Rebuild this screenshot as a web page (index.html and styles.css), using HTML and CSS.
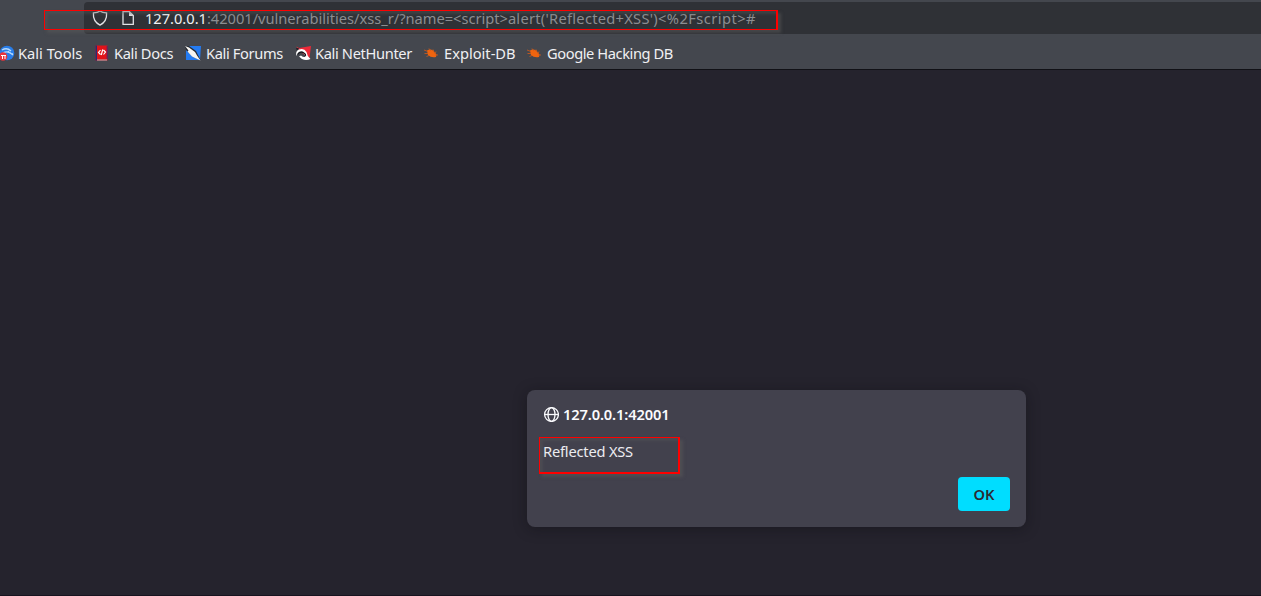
FILE: index.html
```html
<!DOCTYPE html>
<html lang="en">
<head>
<meta charset="utf-8">
<title>127.0.0.1:42001</title>
<link rel="stylesheet" href="styles.css">
</head>
<body>
<div class="browser">
  <header class="toolbar">
    <div class="urlbar">
      <svg class="shield" width="16" height="16" viewBox="0 0 16 16"><path d="M8 .9 C6.3 2.2 4.2 2.7 1.4 2.8 C1 8.600 3.200 12.800 8 15.100 C12.800 12.800 15 8.600 14.600 2.800 C11.800 2.700 9.700 2.200 8 .9Z"/></svg>
      <svg class="page-icon" width="14" height="16" viewBox="0 0 14 16"><path d="M2 1.700H8.400L12.300 5.600V14.300H2Z"/><path class="fold" d="M8 1.500V6H12.500Z"/></svg>
      <span class="url"><b>127.0.0.1</b>:42001/vulnerabilities/xss_r/?name=&lt;script&gt;<span class="call">alert('Reflected+XSS')</span><span class="tail">&lt;%2Fscript&gt;#</span></span>
    </div>
    <div class="mark mark-url"></div>
  </header>
  <nav class="bookmarks">
    <a class="bm tools">
      <svg width="16" height="16" viewBox="0 0 16 16"><circle cx="8" cy="8" r="7.300" fill="#287de8"/><path d="M3 5Q8 2 12 6M4 8Q9 5 14 10M9 6Q11 9 14 9" fill="none" stroke="#b9dafa" stroke-width="1.300"/><circle cx="4" cy="11.500" r="4.300" fill="#e8343c"/><path d="M2 10.500H7M3.500 10.500V14M6 10.500V14" stroke="#fff" fill="none"/></svg>
      <span>Kali Tools</span></a>
    <a class="bm docs">
      <svg width="16" height="16" viewBox="0 0 16 16"><path d="M1.500 .5H13.500V15.500H1.500Z" fill="#e01319"/><path d="M1.500 .5H3V15.500H1.500Z" fill="#292b73"/><path d="M3 15H13" stroke="#b9b4bb"/><path d="M13.200 1V14" stroke="#53236d"/><path d="M6.500 5L4.500 7.500L6.500 9.500M9.500 5L11.500 7L9.500 9.500M8.700 4.500L7.300 10" stroke="#fff" stroke-width="1.200" fill="none"/></svg>
      <span>Kali Docs</span></a>
    <a class="bm forums">
      <svg width="16" height="16" viewBox="0 0 16 16"><path d="M1 1H16L15 15H1Z" fill="#247bf1"/><path d="M0 1L4 1L11 6L15.500 15L8 12L1 5Z" fill="#272a30"/><path d="M0 1L4 2.500L10 7L12 10.500L15.500 15.500L10 13L7 11.500L2.500 6.500L3.500 5.500Z" fill="#f6f5f1"/></svg>
      <span>Kali Forums</span></a>
    <a class="bm nethunter">
      <svg width="16" height="16" viewBox="0 0 16 16"><path d="M1 1.500L4 3L16 1L14.500 13L7 8Z" fill="#ed2939"/><path d="M1 3L4 3L2 6Z" fill="#20242a"/><path d="M1.500 11Q0 6 4 4.500Q9 2.500 11.500 7Q12 11 15.500 14Q11 16 7 14L4 11.500L6 10.500Q9 13 10.500 11.500Q9 7 6 7Q3 7 1.500 11Z" fill="#fff"/><path d="M2.500 9.500Q5 5.500 9 8Q11 9 10.500 11" fill="none" stroke="#15171c" stroke-width="1.300"/></svg>
      <span>Kali NetHunter</span></a>
    <a class="bm exploit">
      <svg width="16" height="16" viewBox="0 0 16 16"><use href="#bug"/></svg>
      <span>Exploit-DB</span></a>
    <a class="bm google">
      <svg width="16" height="16" viewBox="0 0 16 16"><g id="bug"><path d="M4 5.500Q7 3.500 10 5.500L13.500 9.500L13 12Q8 13 5 10Z" fill="#ee640f"/><path d="M1 5L5 6.500M1.500 8.500L5 8.500M3.500 11.500L6 10.500M6 3.500L8 6M10 4.500L11 7M13 6.500L12 9M15 10L12 10" stroke="#d55a17" stroke-width=".8" fill="none"/></g></svg>
      <span>Google Hacking DB</span></a>
  </nav>
  <main class="content">
    <section class="dialog">
      <h1 class="origin"><svg width="16" height="16" viewBox="0 0 16 16"><circle cx="8.500" cy="8.500" r="6.900"/><ellipse cx="8.500" cy="8.500" rx="3.500" ry="6.900"/><path d="M1.600 8.500H15.400"/></svg><span>127.0.0.1:42001</span></h1>
      <p class="message"><span>Reflected XSS</span></p>
      <button class="ok">OK</button>
      <div class="mark mark-message"></div>
    </section>
  </main>
</div>
</body>
</html>
```
FILE: styles.css
```css
* { box-sizing: border-box; }
body { margin: 0; background: #25232d; font: 14.67px/20px "Noto Sans", sans-serif; color: #fbfbfe; }
.browser { height: 596px; overflow: hidden; display: flex; flex-direction: column; }
.toolbar { height: 34px; background: #44474e; padding: 2px 0 0 84px; position: relative; flex: none; }
.urlbar { height: 32px; background: #2f3136; border-radius: 4px 0 0 4px; display: flex; align-items: center; padding: 0 0 0 8px; }
.shield, .page-icon { fill: none; stroke: #e2e2e6; stroke-width: 1.300; flex: none; }
.page-icon { margin-left: 13px; }
.page-icon .fold { fill: #e2e2e6; stroke: none; }
.url { margin-left: 10px; color: #8c8d91; white-space: nowrap; letter-spacing: -.02px; }
.url b { color: #f1f1f4; font-weight: 400; }
.call { letter-spacing: .27px; }
.tail { letter-spacing: .45px; }
.bookmarks { height: 36px; flex: none; background: #44474e; border-bottom: 1px solid #111116; display: flex; padding-top: 9px; }
.bm { display: flex; height: 20px; align-items: center; flex: none; white-space: nowrap; color: #f0f0f3; letter-spacing: -.36px; }
.bm svg { flex: none; margin-right: 4px; overflow: visible; }
.tools { width: 95px; margin-left: -1px; letter-spacing: 0; }
.tools svg { margin-right: 3px; }
.docs { width: 91px; }
.forums { width: 110px; }
.forums svg { margin-right: 5px; }
.nethunter { width: 128px; }
.exploit { width: 103px; letter-spacing: 0; }
.exploit svg { margin-right: 5px; }
.google { letter-spacing: -.42px; }
.google svg { margin-right: 5px; }
.content { flex: 1; border-bottom: 1px solid #17131f; padding: 320px 0 0 527px; }
.dialog { width: 499px; height: 137px; border-radius: 8px; background: #42414d; box-shadow: 0 2px 14px rgba(12,12,18,.4); padding: 14px 16px 16px; position: relative; display: flex; flex-direction: column; }
.origin { margin: 0; font-size: 14.67px; line-height: 20px; font-weight: 600; letter-spacing: -.13px; display: flex; align-items: center; }
.origin svg { margin-right: 4px; fill: none; stroke: #fbfbfe; stroke-width: 1.300; }
.message { margin: 17px 0 16px; line-height: 20px; color: #ececf1; letter-spacing: -.2px; }
.ok { width: 52px; height: 34px; border: 0; border-radius: 4px; background: #00ddff; color: #2b2a33; font: 600 14.67px/20px "Noto Sans", sans-serif; padding: 0 0 1px; align-self: flex-end; }
.mark { position: absolute; border: 1px solid #ff0000; pointer-events: none; box-shadow: 3px 3px 3px rgba(90,90,90,.55), inset 3px 3px 3px rgba(90,90,90,.4); }
.mark-url { left: 44px; top: 10px; width: 734px; height: 20px; border-right-width: 2px; z-index: 1; }
.mark-message { left: 12px; top: 47px; width: 141px; height: 37px; border-right-width: 2px; border-bottom-width: 2px; }
```
